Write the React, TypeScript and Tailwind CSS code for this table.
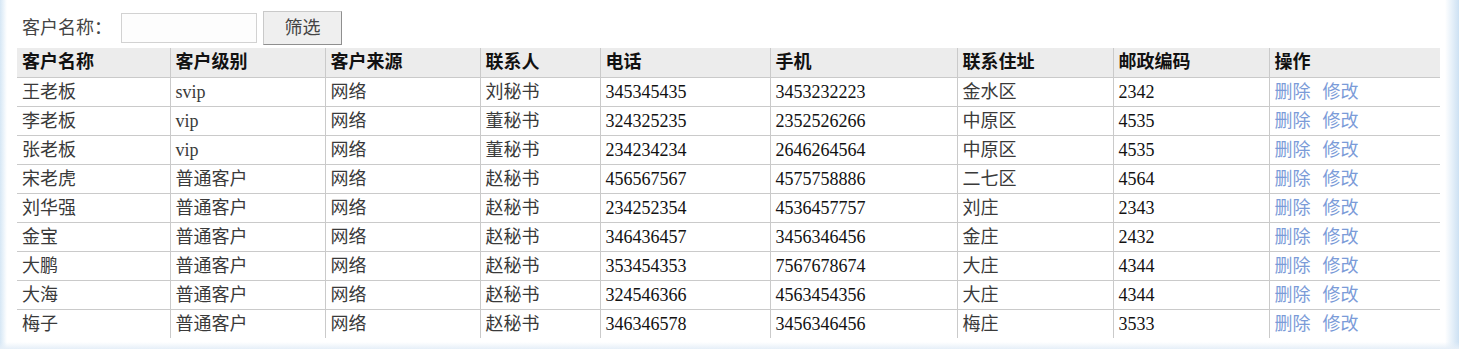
import React from "react";

const cols = [153, 155, 155, 120, 170, 187, 156, 156, 171];
const headers = ["客户名称", "客户级别", "客户来源", "联系人", "电话", "手机", "联系住址", "邮政编码", "操作"];
const rows = [
  ["王老板", "svip", "网络", "刘秘书", "345345435", "3453232223", "金水区", "2342"],
  ["李老板", "vip", "网络", "董秘书", "324325235", "2352526266", "中原区", "4535"],
  ["张老板", "vip", "网络", "董秘书", "234234234", "2646264564", "中原区", "4535"],
  ["宋老虎", "普通客户", "网络", "赵秘书", "456567567", "4575758886", "二七区", "4564"],
  ["刘华强", "普通客户", "网络", "赵秘书", "234252354", "4536457757", "刘庄", "2343"],
  ["金宝", "普通客户", "网络", "赵秘书", "346436457", "3456346456", "金庄", "2432"],
  ["大鹏", "普通客户", "网络", "赵秘书", "353454353", "7567678674", "大庄", "4344"],
  ["大海", "普通客户", "网络", "赵秘书", "324546366", "4563454356", "大庄", "4344"],
  ["梅子", "普通客户", "网络", "赵秘书", "346346578", "3456346456", "梅庄", "3533"],
];

const font = { fontFamily: '"Liberation Serif", "Noto Sans CJK SC", serif' };

export default function App() {
  return (
    <div
      className="w-[1459px] h-[349px] overflow-hidden bg-[linear-gradient(to_top,#e6eff8,rgba(255,255,255,0)_7px),linear-gradient(to_right,#d6e7f5,#ffffff_7px,#ffffff_1445px,#cde1f3)]"
      style={font}
    >
      <div className="pl-[17px] pt-[11px]">
        <div className="flex items-start h-[34px]">
          <span className="pl-[5px] w-[104px] text-[18px] leading-[34px] text-[#444]">客户名称：</span>
          <input className="mt-[2px] w-[136px] h-[30px] border border-[#d2d2d2] bg-[#fdfdfd] outline-none" />
          <button className="ml-[6px] w-[79px] h-[34px] bg-[#efefef] border border-[#c9c9c9] border-r-[#8f8f8f] border-b-[#8f8f8f] text-[18px] text-[#444] leading-none">
            筛选
          </button>
        </div>
        <table className="mt-[3px] border-collapse table-fixed w-[1423px] text-[18px]">
          <colgroup>
            {cols.map((w, i) => (
              <col key={i} style={{ width: w }} />
            ))}
          </colgroup>
          <thead>
            <tr className="bg-[#ececec] h-[29px]">
              {headers.map((h, i) => (
                <th
                  key={i}
                  className={`text-left font-bold text-[#111] pl-[5px] pt-0 pb-0 leading-[28px] ${i > 0 ? "border-l border-[#cacaca]" : ""}`}
                >
                  {h}
                </th>
              ))}
            </tr>
          </thead>
          <tbody>
            {rows.map((r, ri) => (
              <tr key={ri} className="h-[29px] border-t border-[#cacaca]">
                {r.map((c, ci) => (
                  <td
                    key={ci}
                    className={`pl-[5px] leading-[28px] whitespace-nowrap ${ci > 0 ? "border-l border-[#cacaca]" : ""} ${/^[0-9]+$/.test(c) ? "text-[#111]" : "text-[#3a3a3a]"}`}
                  >
                    {c}
                  </td>
                ))}
                <td className="pl-[5px] leading-[28px] whitespace-nowrap border-l border-[#cacaca] text-[#7b9bd8]">
                  <span>删除</span>
                  <span className="ml-[12px]">修改</span>
                </td>
              </tr>
            ))}
          </tbody>
        </table>
      </div>
    </div>
  );
}
